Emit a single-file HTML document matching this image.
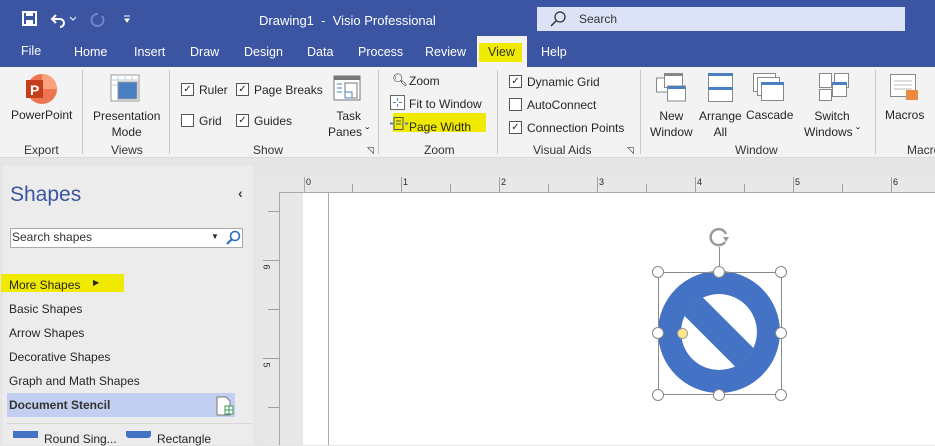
<!DOCTYPE html>
<html><head><style>
*{margin:0;padding:0;box-sizing:border-box}
body{width:935px;height:445px;overflow:hidden;font-family:"Liberation Sans",sans-serif;background:#e6e6e6;position:relative;font-size:12px;color:#262626}
.a{position:absolute;white-space:nowrap}
.w{color:#fff}
.cb{position:absolute;width:13px;height:13px;border:1px solid #555;background:#fff;font-size:10px;line-height:11px;text-align:center}
.sep{position:absolute;width:1px;background:#c8c8c8;top:70px;height:84px}
.gl{position:absolute;top:143px;font-size:12px;color:#333}
.rt{position:absolute;background:#a0a0a0}
.hd{position:absolute;width:12px;height:12px;border:1.5px solid #888;border-radius:50%;background:#fff}
</style></head><body>
<div class="a" style="left:0;top:0;width:935px;height:67px;background:#3b55a2"></div>
<!-- title icons -->
<svg class="a" style="left:22px;top:10px" width="120" height="18"><rect x="1" y="2" width="13" height="13" fill="none" stroke="#fff" stroke-width="2"/><rect x="4" y="2" width="7" height="4" fill="#fff"/><rect x="4" y="10" width="7" height="5" fill="#fff"/><path d="M34 5 l-4 4 4 4 M30 9 h8 a4 4 0 0 1 0 8" fill="none" stroke="#fff" stroke-width="2"/><path d="M48 7 l3 3 3-3" fill="none" stroke="#fff"/><path d="M76 4 a6 6 0 1 0 4 2" fill="none" stroke="#6f86c6" stroke-width="2"/><path d="M102 6 h6 M103 9 l2 3 2-3z" stroke="#fff" fill="#fff"/></svg>
<div class="a w" style="left:259px;top:13px;font-size:13px">Drawing1 &nbsp;-&nbsp; Visio Professional</div>
<div class="a" style="left:537px;top:7px;width:368px;height:24px;background:#dce3f7"></div>
<svg class="a" style="left:550px;top:11px" width="16" height="16"><circle cx="10" cy="6" r="5" fill="none" stroke="#333" stroke-width="1.3"/><path d="M6 10 l-5 5" stroke="#333" stroke-width="1.5"/></svg>
<div class="a" style="left:579px;top:12px;font-size:12px;color:#333">Search</div>
<div class="a w" style="left:21px;top:44px;font-size:12.5px">File</div>
<div class="a w" style="left:74px;top:45px;font-size:12.5px">Home</div>
<div class="a w" style="left:134px;top:45px;font-size:12.5px">Insert</div>
<div class="a w" style="left:190px;top:45px;font-size:12.5px">Draw</div>
<div class="a w" style="left:244px;top:45px;font-size:12.5px">Design</div>
<div class="a w" style="left:307px;top:45px;font-size:12.5px">Data</div>
<div class="a w" style="left:358px;top:45px;font-size:12.5px">Process</div>
<div class="a w" style="left:425px;top:45px;font-size:12.5px">Review</div>
<div class="a" style="left:477px;top:36px;width:50px;height:31px;background:#f3f3f3"></div>
<div class="a" style="left:479px;top:43px;width:43px;height:19px;background:#f0ea00"></div>
<div class="a" style="left:488px;top:45px;font-size:12.5px;color:#333">View</div>
<div class="a w" style="left:541px;top:45px;font-size:12.5px">Help</div>
<!-- ribbon -->
<div class="a" style="left:0;top:67px;width:935px;height:91px;background:#f3f3f3;border-bottom:1px solid #dadada"></div>
<div class="sep" style="left:82px"></div><div class="sep" style="left:169px"></div><div class="sep" style="left:378px"></div><div class="sep" style="left:497px"></div><div class="sep" style="left:640px"></div><div class="sep" style="left:875px"></div>
<svg class="a" style="left:24px;top:73px" width="34" height="34"><circle cx="18" cy="16" r="15" fill="#ee7552"/><path d="M18 1 a15 15 0 0 1 15 15 h-15z" fill="#f9a37d"/><rect x="2" y="7" width="17" height="18" fill="#c43e1c"/><text x="6" y="22" fill="#fff" font-size="14" font-weight="bold" font-family="Liberation Sans">P</text></svg>
<div class="a" style="left:11px;top:108px">PowerPoint</div>
<div class="gl" style="left:24px">Export</div>
<svg class="a" style="left:110px;top:74px" width="30" height="28"><rect x="1" y="1" width="28" height="26" fill="#fff" stroke="#999"/><path d="M1 6h28M1 11h28M8 1v26M15 1v6M22 1v6" stroke="#bcd" /><rect x="8" y="8" width="19" height="17" fill="#4a7fc1" stroke="#999"/></svg>
<div class="a" style="left:93px;top:108px;text-align:center;line-height:16px">Presentation<br>Mode</div>
<div class="gl" style="left:111px">Views</div>
<div class="cb" style="left:181px;top:83px">✓</div><div class="a" style="left:199px;top:83px">Ruler</div>
<div class="cb" style="left:236px;top:83px">✓</div><div class="a" style="left:254px;top:83px">Page Breaks</div>
<div class="cb" style="left:181px;top:114px"></div><div class="a" style="left:199px;top:114px">Grid</div>
<div class="cb" style="left:236px;top:114px">✓</div><div class="a" style="left:254px;top:114px">Guides</div>
<svg class="a" style="left:333px;top:75px" width="28" height="26"><rect x="1" y="1" width="26" height="24" fill="#fff" stroke="#777"/><rect x="1" y="1" width="26" height="4" fill="#777"/><path d="M4 9h5M4 13h5M4 17h5" stroke="#4a7fc1"/><rect x="12" y="8" width="12" height="15" fill="none" stroke="#777"/><rect x="12" y="17" width="7" height="6" fill="none" stroke="#4a7fc1"/></svg>
<div class="a" style="left:328px;top:108px;text-align:center;line-height:16px">Task<br>Panes ˇ</div>
<div class="gl" style="left:253px">Show</div>
<div class="a" style="left:367px;top:145px;font-size:9px">◹</div>
<div class="a" style="left:392px;top:73px;font-size:12.5px">🔍︎</div><div class="a" style="left:409px;top:74px">Zoom</div>
<svg class="a" style="left:390px;top:95px" width="15" height="15"><rect x="0.5" y="0.5" width="14" height="14" fill="#fff" stroke="#666"/><path d="M7.5 3v3M7.5 9v3M3 7.5h3M9 7.5h3" stroke="#4a7fc1"/></svg>
<div class="a" style="left:409px;top:97px">Fit to Window</div>
<div class="a" style="left:393px;top:113px;width:93px;height:19px;background:#f0ea00"></div>
<svg class="a" style="left:390px;top:117px" width="18" height="13"><rect x="4" y="0.5" width="9" height="12" fill="none" stroke="#555"/><path d="M6 4h5M6 7h5" stroke="#555"/><path d="M3 6.5l-3 0M15 6.5h3" stroke="#4a7fc1" stroke-width="2"/></svg>
<div class="a" style="left:409px;top:120px">Page Width</div>
<div class="gl" style="left:424px">Zoom</div>
<div class="cb" style="left:509px;top:75px">✓</div><div class="a" style="left:527px;top:75px">Dynamic Grid</div>
<div class="cb" style="left:509px;top:98px"></div><div class="a" style="left:527px;top:98px">AutoConnect</div>
<div class="cb" style="left:509px;top:121px">✓</div><div class="a" style="left:527px;top:121px">Connection Points</div>
<div class="gl" style="left:533px">Visual Aids</div>
<div class="a" style="left:627px;top:145px;font-size:9px">◹</div>
<svg class="a" style="left:656px;top:73px" width="300" height="30"><g fill="#fff" stroke="#888"><rect x="0.5" y="5" width="18" height="14"/><rect x="8.5" y="0.5" width="18" height="14"/><rect x="11.5" y="13" width="18" height="15"/></g><rect x="12" y="13" width="17" height="3" fill="#4a7fc1"/><rect x="8" y="0" width="19" height="3" fill="#888"/>
<rect x="52.5" y="0.5" width="24" height="28" fill="#fff" stroke="#888"/><rect x="52" y="0" width="25" height="3" fill="#4a7fc1"/><rect x="52" y="14" width="25" height="3" fill="#4a7fc1"/>
<g fill="#fff" stroke="#888"><rect x="97.5" y="0.5" width="22" height="18"/><rect x="101.5" y="4.5" width="22" height="18"/><rect x="105.5" y="9.5" width="22" height="18"/></g><rect x="105" y="9" width="23" height="3" fill="#4a7fc1"/>
<g fill="#fff" stroke="#888"><rect x="163.5" y="0.5" width="12" height="14"/><rect x="178.5" y="0.5" width="14" height="14"/><rect x="163.5" y="16.5" width="12" height="11"/><rect x="176.5" y="9.5" width="14" height="14"/></g><rect x="176" y="9" width="15" height="3" fill="#4a7fc1"/>
<rect x="234.5" y="1.5" width="25" height="22" fill="#fff" stroke="#888"/><path d="M238 8h18M238 12h18M238 16h18" stroke="#bbb"/><path d="M250 17h12v10h-12z" fill="#ed8a3f"/></svg>
<div class="a" style="left:650px;top:108px;text-align:center;line-height:16px">New<br>Window</div>
<div class="a" style="left:699px;top:108px;text-align:center;line-height:16px">Arrange<br>All</div>
<div class="a" style="left:746px;top:108px">Cascade</div>
<div class="a" style="left:804px;top:108px;text-align:center;line-height:16px">Switch<br>Windows ˇ</div>
<div class="gl" style="left:735px">Window</div>
<div class="a" style="left:885px;top:108px">Macros</div>
<div class="gl" style="left:907px">Macro</div>
<!-- left pane -->
<div class="a" style="left:3px;top:166px;width:250px;height:279px;background:#ececec"></div>
<div class="a" style="left:10px;top:183px;font-size:21px;color:#3b55a2">Shapes</div>
<div class="a" style="left:238px;top:185px;font-size:14px;font-weight:bold;color:#444">‹</div>
<div class="a" style="left:10px;top:228px;width:233px;height:20px;background:#fff;border:1px solid #aaa"></div>
<div class="a" style="left:12px;top:230px;color:#333">Search shapes</div>
<div class="a" style="left:211px;top:232px;font-size:8px">▼</div>
<svg class="a" style="left:225px;top:230px" width="16" height="16"><circle cx="10" cy="6" r="4.5" fill="none" stroke="#2b6bbf" stroke-width="1.6"/><path d="M7 9l-5 5" stroke="#2b6bbf" stroke-width="2"/></svg>
<div class="a" style="left:1px;top:274px;width:123px;height:18px;background:#f0ea00"></div>
<div class="a" style="left:9px;top:278px">More Shapes</div>
<div class="a" style="left:93px;top:278px;font-size:8px">▶</div>
<div class="a" style="left:9px;top:302px">Basic Shapes</div>
<div class="a" style="left:9px;top:326px">Arrow Shapes</div>
<div class="a" style="left:9px;top:350px">Decorative Shapes</div>
<div class="a" style="left:9px;top:374px">Graph and Math Shapes</div>
<div class="a" style="left:7px;top:393px;width:228px;height:24px;background:#c3cff0"></div>
<div class="a" style="left:9px;top:398px;font-weight:bold;color:#333">Document Stencil</div>
<svg class="a" style="left:216px;top:396px" width="18" height="20"><path d="M1 1h9l4 4v14h-13z" fill="#fff" stroke="#777"/><rect x="9" y="10" width="8" height="8" fill="#fff" stroke="#3a9a5a"/><path d="M13 10v8M9 14h8" stroke="#3a9a5a"/></svg>
<div class="a" style="left:7px;top:423px;width:245px;height:1px;background:#d8d8d8"></div>
<div class="a" style="left:13px;top:431px;width:25px;height:7px;background:#4472c4"></div>
<div class="a" style="left:44px;top:432px">Round Sing...</div>
<div class="a" style="left:126px;top:431px;width:25px;height:7px;background:#4472c4;border-radius:0 0 3px 3px"></div>
<div class="a" style="left:157px;top:432px">Rectangle</div>
<!-- canvas -->
<div class="a" style="left:263px;top:176px;width:672px;height:17px;background:#e8e8e8;border-bottom:1px solid #a8a8a8"></div>
<div class="a" style="left:263px;top:192px;width:17px;height:253px;background:#e8e8e8;border-right:1px solid #a8a8a8"></div>
<div class="a" style="left:280px;top:193px;width:23px;height:252px;background:#e8e8e8"></div>
<div class="a" style="left:303px;top:193px;width:632px;height:252px;background:#fff"></div>
<div class="a" style="left:328px;top:193px;width:1px;height:252px;background:#aaa"></div>
<div class="a" style="left:304px;top:177px;width:1px;height:15px;background:#aaa"></div>
<div class="a" style="left:306px;top:177px;font-size:9px">0</div>
<div class="rt" style="left:352px;top:184px;width:1px;height:8px"></div>
<div class="rt" style="left:401px;top:177px;width:1px;height:15px"></div><div class="a" style="left:403px;top:177px;font-size:9px">1</div>
<div class="rt" style="left:450px;top:184px;width:1px;height:8px"></div>
<div class="rt" style="left:499px;top:177px;width:1px;height:15px"></div><div class="a" style="left:501px;top:177px;font-size:9px">2</div>
<div class="rt" style="left:548px;top:184px;width:1px;height:8px"></div>
<div class="rt" style="left:597px;top:177px;width:1px;height:15px"></div><div class="a" style="left:599px;top:177px;font-size:9px">3</div>
<div class="rt" style="left:646px;top:184px;width:1px;height:8px"></div>
<div class="rt" style="left:695px;top:177px;width:1px;height:15px"></div><div class="a" style="left:697px;top:177px;font-size:9px">4</div>
<div class="rt" style="left:744px;top:184px;width:1px;height:8px"></div>
<div class="rt" style="left:793px;top:177px;width:1px;height:15px"></div><div class="a" style="left:795px;top:177px;font-size:9px">5</div>
<div class="rt" style="left:842px;top:184px;width:1px;height:8px"></div>
<div class="rt" style="left:891px;top:177px;width:1px;height:15px"></div><div class="a" style="left:893px;top:177px;font-size:9px">6</div>
<div class="rt" style="left:268px;top:211px;width:11px;height:1px"></div>
<div class="rt" style="left:263px;top:260px;width:16px;height:1px"></div><div class="a" style="left:264px;top:262px;font-size:9px;transform:rotate(90deg)">6</div>
<div class="rt" style="left:268px;top:309px;width:11px;height:1px"></div>
<div class="rt" style="left:263px;top:358px;width:16px;height:1px"></div><div class="a" style="left:264px;top:360px;font-size:9px;transform:rotate(90deg)">5</div>
<div class="rt" style="left:268px;top:407px;width:11px;height:1px"></div>
<!-- shape -->
<svg class="a" style="left:640px;top:220px" width="160" height="190">
<defs><clipPath id="c"><circle cx="79" cy="112" r="38"/></clipPath></defs>
<circle cx="79" cy="112" r="61" fill="#4472c4"/>
<g clip-path="url(#c)"><circle cx="79" cy="112" r="38" fill="#fff"/><path d="M30 63 L128 161" stroke="#4472c4" stroke-width="26"/></g>
<rect x="18.5" y="52.5" width="123" height="122" fill="none" stroke="#8a8a8a"/>
<path d="M79.5 52V27" stroke="#8a8a8a"/>
<path d="M86 14 a8 8 0 1 0 -1 8" fill="none" stroke="#999" stroke-width="2.5"/><path d="M83 17 l6 0 -3 5z" fill="#999"/>
</svg>
<div class="hd" style="left:652px;top:266px"></div><div class="hd" style="left:713px;top:266px"></div><div class="hd" style="left:775px;top:266px"></div>
<div class="hd" style="left:652px;top:327px"></div><div class="hd" style="left:775px;top:327px"></div>
<div class="hd" style="left:652px;top:389px"></div><div class="hd" style="left:713px;top:389px"></div><div class="hd" style="left:775px;top:389px"></div>
<div class="a" style="left:677px;top:328px;width:11px;height:11px;border-radius:50%;background:#ffe68a;border:1px solid #999"></div>
</body></html>
